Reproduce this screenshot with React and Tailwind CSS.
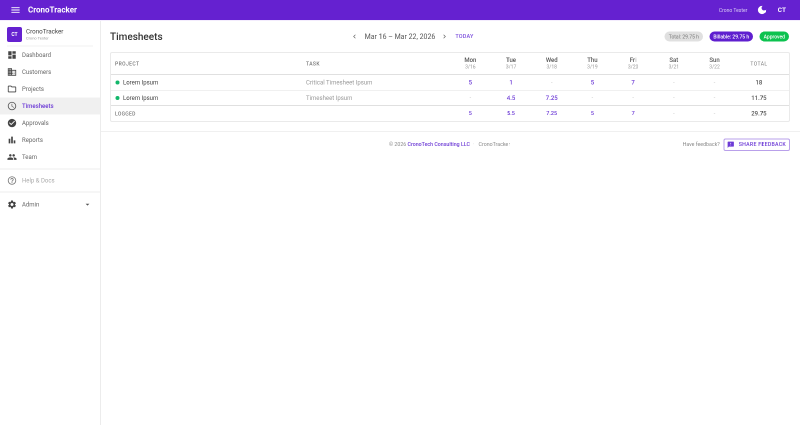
import {
  MdMenu, MdDarkMode, MdDashboard, MdOutlineBusiness, MdOutlineFolder, MdOutlineAccessTime,
  MdCheckCircle, MdBarChart, MdPeople, MdHelpOutline, MdSettings, MdArrowDropDown,
  MdChevronLeft, MdChevronRight, MdFeedback,
} from 'react-icons/md';

const nav = [
  { label: 'Dashboard', icon: MdDashboard },
  { label: 'Customers', icon: MdOutlineBusiness },
  { label: 'Projects', icon: MdOutlineFolder },
  { label: 'Timesheets', icon: MdOutlineAccessTime, active: true },
  { label: 'Approvals', icon: MdCheckCircle },
  { label: 'Reports', icon: MdBarChart },
  { label: 'Team', icon: MdPeople },
];

const days = [
  ['Mon', '3/16'], ['Tue', '3/17'], ['Wed', '3/18'], ['Thu', '3/19'],
  ['Fri', '3/20'], ['Sat', '3/21'], ['Sun', '3/22'],
];

const rows = [
  { project: 'Lorem Ipsum', task: 'Critical Timesheet Ipsum', hours: ['5', '1', '-', '5', '7', '-', '-'], total: '18', h: 'h-8 border-[#f0f0f0]' },
  { project: 'Lorem Ipsum', task: 'Timesheet Ipsum', hours: ['-', '4.5', '7.25', '-', '-', '-', '-'], total: '11.75', h: 'h-[30px] border-[#e0e0e0]' },
];

const logged = ['5', '5.5', '7.25', '5', '7', '-', '-'];
const cols = 'grid grid-cols-[378px_300px_repeat(7,81.4px)_1fr]';

function Hour({ value, small }) {
  if (value === '-') return <div className="text-center text-[11px] text-[#bdbdbd]">-</div>;
  return <div className={`text-center font-medium text-[#6d3bd6] ${small ? 'text-[11px]' : 'text-xs'}`}>{value}</div>;
}

// the reference is a 1600px page shown at half size
export default function App() {
  return (
    <div className="h-[425px] w-[800px] overflow-hidden bg-white">
      <div className="flex h-[850px] w-[1600px] origin-top-left scale-50 flex-col font-['Roboto',sans-serif] text-[#333] will-change-transform">
        <header className="flex h-10 shrink-0 items-center bg-[#6521d0] pl-5 pr-7 text-white">
          <MdMenu className="text-[22px]" />
          <span className="ml-[14px] text-base font-bold">CronoTracker</span>
          <span className="ml-auto text-[10px] text-[#ddd0f7]">Crono Tester</span>
          <MdDarkMode className="ml-[18px] text-[22px]" />
          <span className="ml-[21px] text-[13px] font-bold">CT</span>
        </header>

        <div className="flex min-h-0 flex-1 border-t-2 border-[#f3ecfd]">
          <aside className="w-[202px] shrink-0 border-r-2 border-[#ececec]">
            <div className="mx-[14px] flex h-[51px] items-center gap-2 border-b-2 border-[#f0f0f0] pt-1">
              <div className="flex h-[30px] w-[30px] items-center justify-center rounded bg-[#6521d0] text-[10px] font-bold text-white">CT</div>
              <div>
                <div className="text-[12.5px] leading-4 text-[#444]">CronoTracker</div>
                <div className="text-[8px] leading-3 text-[#999]">Crono Tester</div>
              </div>
            </div>
            <nav>
              {nav.map(({ label, icon: Icon, active }) => (
                <div key={label} className={`flex h-[34px] items-center pl-[14px] text-xs ${active ? 'bg-[#f0f0f0] font-medium text-[#6d3bd6]' : 'text-[#666]'}`}>
                  <Icon className={`w-5 text-xl ${active ? 'text-[#555]' : 'text-[#444]'}`} />
                  <span className="ml-[10px]">{label}</span>
                </div>
              ))}
            </nav>
            <div className="mt-[6px] flex h-12 items-center border-y-2 border-[#ececec] pl-[14px] text-xs text-[#aaa]">
              <MdHelpOutline className="text-xl text-[#777]" />
              <span className="ml-[10px]">Help &amp; Docs</span>
            </div>
            <div className="flex h-12 items-center pl-[14px] pr-4 text-xs text-[#666]">
              <MdSettings className="text-xl text-[#444]" />
              <span className="ml-[10px]">Admin</span>
              <MdArrowDropDown className="ml-auto text-lg text-[#555]" />
            </div>
          </aside>

          <main className="min-w-0 flex-1">
            <div className="border-b-2 border-[#f0f0f0] pb-[18px]">
              <div className="ml-[18px] mr-5 flex h-[62px] items-center pr-[2px]">
                <h1 className="text-xl font-medium text-[#333]">Timesheets</h1>
                <div className="ml-[376px] flex items-center text-[#666]">
                  <MdChevronLeft className="text-base" />
                  <span className="ml-3 text-sm text-[#555]">Mar 16 – Mar 22, 2026</span>
                  <MdChevronRight className="ml-[10px] text-base" />
                  <span className="ml-[14px] text-[11px] font-medium tracking-[0.4px] text-[#7c4fdd]">TODAY</span>
                </div>
                <div className="ml-auto flex items-center gap-[13px] text-[10px]">
                  <span className="flex h-5 items-center rounded-full bg-[#e0e0e0] px-2 text-[#777]">Total: 29.75 h</span>
                  <span className="flex h-5 items-center rounded-full bg-[#5f1fcf] px-2 font-medium text-white">Billable: 29.75 h</span>
                  <span className="flex h-5 items-center rounded-full bg-[#0cc24f] px-2 font-medium text-white">Approved</span>
                </div>
              </div>

              <div className="ml-[18px] mr-5 rounded border-2 border-[#eaeaea]">
                <div className={`${cols} h-11 items-center border-b-2 border-[#e0e0e0]`}>
                  <div className="pl-2 text-[10px] font-medium tracking-[0.8px] text-[#777]">PROJECT</div>
                  <div className="pl-3 text-[10px] font-medium tracking-[0.8px] text-[#777]">TASK</div>
                  {days.map(([d, date]) => (
                    <div key={d} className="text-center">
                      <div className="text-xs font-medium leading-[14px] text-[#555]">{d}</div>
                      <div className="text-[10px] leading-[14px] text-[#999]">{date}</div>
                    </div>
                  ))}
                  <div className="pr-3 text-center text-[10px] tracking-[0.8px] text-[#777]">TOTAL</div>
                </div>
                {rows.map((row, i) => (
                  <div key={i} className={`${cols} ${row.h} items-center border-b-2`}>
                    <div className="flex items-center pl-[9px] text-xs text-[#444]">
                      <span className="mr-[7px] h-2 w-2 rounded-full bg-[#12b76a]" />
                      {row.project}
                    </div>
                    <div className="pl-3 text-xs text-[#999]">{row.task}</div>
                    {row.hours.map((h, j) => <Hour key={j} value={h} />)}
                    <div className="pr-3 text-center text-xs font-medium text-[#555]">{row.total}</div>
                  </div>
                ))}
                <div className={`${cols} h-[30px] items-center`}>
                  <div className="pl-2 text-[10px] font-medium tracking-[0.6px] text-[#777]">LOGGED</div>
                  <div />
                  {logged.map((h, j) => <Hour key={j} value={h} small />)}
                  <div className="pr-3 text-center text-xs font-medium text-[#555]">29.75</div>
                </div>
              </div>
            </div>

            <footer className="ml-[18px] mr-5 flex h-[50px] items-center text-[10.5px] text-[#888]">
              <div className="ml-[558px]">
                © 2026 <span className="font-medium text-[#6d3bd6]">CronoTech Consulting LLC</span>
                <span className="mx-[6px] text-[#ccc]">·</span> CronoTracker
              </div>
              <span className="ml-auto">Have feedback?</span>
              <div className="ml-2 flex h-[25px] items-center rounded-sm border-2 border-[#b9a0ea] pl-[5px] pr-[6px] text-[10.5px] font-medium tracking-[0.5px] text-[#6d3bd6]">
                <MdFeedback className="text-[15px]" />
                <span className="ml-2">SHARE FEEDBACK</span>
              </div>
            </footer>
          </main>
        </div>
      </div>
    </div>
  );
}
